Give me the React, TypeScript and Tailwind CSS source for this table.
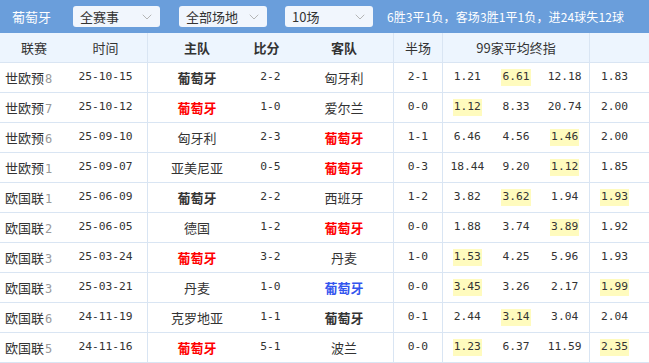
import { ChevronDown } from 'lucide-react'

type Team = { name: string; tone?: 'dark' | 'red' | 'blue' }

type Match = {
  league: string
  round: string
  date: string
  home: Team
  score: string
  away: Team
  half: string
  odds: [string, string, string]
  hi: number
  last: string
  lastHi?: boolean
}

const PT = (tone: 'dark' | 'red' | 'blue'): Team => ({ name: '葡萄牙', tone })

const MATCHES: Match[] = [
  { league: '世欧预', round: '8', date: '25-10-15', home: PT('dark'), score: '2-2', away: { name: '匈牙利' }, half: '2-1', odds: ['1.21', '6.61', '12.18'], hi: 1, last: '1.83' },
  { league: '世欧预', round: '7', date: '25-10-12', home: PT('red'), score: '1-0', away: { name: '爱尔兰' }, half: '0-0', odds: ['1.12', '8.33', '20.74'], hi: 0, last: '2.00' },
  { league: '世欧预', round: '6', date: '25-09-10', home: { name: '匈牙利' }, score: '2-3', away: PT('red'), half: '1-1', odds: ['6.46', '4.56', '1.46'], hi: 2, last: '2.00' },
  { league: '世欧预', round: '1', date: '25-09-07', home: { name: '亚美尼亚' }, score: '0-5', away: PT('red'), half: '0-3', odds: ['18.44', '9.20', '1.12'], hi: 2, last: '1.85' },
  { league: '欧国联', round: '1', date: '25-06-09', home: PT('dark'), score: '2-2', away: { name: '西班牙' }, half: '1-2', odds: ['3.82', '3.62', '1.94'], hi: 1, last: '1.93', lastHi: true },
  { league: '欧国联', round: '2', date: '25-06-05', home: { name: '德国' }, score: '1-2', away: PT('red'), half: '0-0', odds: ['1.88', '3.74', '3.89'], hi: 2, last: '1.92' },
  { league: '欧国联', round: '3', date: '25-03-24', home: PT('red'), score: '3-2', away: { name: '丹麦' }, half: '1-0', odds: ['1.53', '4.25', '5.96'], hi: 0, last: '1.93' },
  { league: '欧国联', round: '3', date: '25-03-21', home: { name: '丹麦' }, score: '1-0', away: PT('blue'), half: '0-0', odds: ['3.45', '3.26', '2.17'], hi: 0, last: '1.99', lastHi: true },
  { league: '欧国联', round: '6', date: '24-11-19', home: { name: '克罗地亚' }, score: '1-1', away: PT('dark'), half: '0-1', odds: ['2.44', '3.14', '3.04'], hi: 1, last: '2.04' },
  { league: '欧国联', round: '5', date: '24-11-16', home: PT('red'), score: '5-1', away: { name: '波兰' }, half: '0-0', odds: ['1.23', '6.37', '11.59'], hi: 0, last: '2.35', lastHi: true },
]

const cjk = "font-['Noto_Sans_CJK_SC',sans-serif]"
const num = "font-['DejaVu_Sans_Mono','Noto_Sans_CJK_SC',monospace] text-[11.25px]"

const TeamName = ({ team }: { team: Team }) => {
  const tone =
    team.tone === 'red'
      ? 'text-[#ff0000] font-bold'
      : team.tone === 'blue'
      ? 'text-[#3355ee] font-bold'
      : team.tone === 'dark'
      ? 'text-[#333] font-bold'
      : 'text-[#333]'
  return <span className={tone}>{team.name}</span>
}

const Hi = ({ on, children }: { on?: boolean; children: string }) => (
  <span className={on ? 'bg-[#fffbbe] px-px' : 'px-px'}>{children}</span>
)

const Select = ({ label, width }: { label: string; width: string }) => (
  <div className={`flex items-center justify-between h-[21px] rounded-[3px] bg-[#f1f6fd] pl-[7px] pr-[5px] ${width}`}>
    <span className="text-[13px] text-[#333]">{label}</span>
    <ChevronDown className="w-4 h-4 text-[#b0b0b0]" strokeWidth={1.4} />
  </div>
)

const row = 'grid grid-cols-[68px_79px_99px_49px_98px_49px_147px_1fr] h-[30px] border-b border-[#d9e5f3]'
const vline = 'border-l border-[#d9e5f3]'

export default function App() {
  return (
    <div className={`w-[649px] h-[363px] overflow-hidden bg-white ${cjk}`}>
      {/* Top bar */}
      <div className="flex items-center h-[33px] bg-[#6a9edb] text-white">
        <span className="pl-3 w-[73px] text-[13px]">葡萄牙</span>
        <Select label="全赛事" width="w-[87px]" />
        <div className="w-[19px]" />
        <Select label="全部场地" width="w-[88px]" />
        <div className="w-[18px]" />
        <Select label="10场" width="w-[88px]" />
        <span className="pl-[14px] text-[12px] tracking-[0.1px] whitespace-nowrap">
          6胜3平1负，客场3胜1平1负，进24球失12球
        </span>
      </div>

      {/* Header row */}
      <div className={`${row} bg-[#edf5fe] text-[13px] text-[#333] items-stretch`}>
        <div className="flex items-center justify-center">联赛</div>
        <div className="flex items-center justify-center pr-1">时间</div>
        <div className={`flex items-center justify-center font-bold ${vline}`}>主队</div>
        <div className="flex items-center justify-center font-bold pr-2">比分</div>
        <div className="flex items-center justify-center font-bold">客队</div>
        <div className={`flex items-center justify-center ${vline}`}>半场</div>
        <div className={`flex items-center justify-center ${vline}`}>99家平均终指</div>
        <div className={vline} />
      </div>

      {/* Rows */}
      {MATCHES.map((m, i) => (
        <div key={i} className={`${row} text-[13px] text-[#333] items-stretch`}>
          <div className="flex items-center pl-[5px]">
            <span className="whitespace-nowrap">
              {m.league}
              <span className="font-['DejaVu_Sans_Mono',monospace] text-[12px] text-[#999] pl-px">{m.round}</span>
            </span>
          </div>
          <div className={`flex items-center justify-center pr-1 ${num}`}>{m.date}</div>
          <div className={`flex items-center justify-center ${vline}`}>
            <TeamName team={m.home} />
          </div>
          <div className={`flex items-center justify-center ${num}`}>{m.score}</div>
          <div className="flex items-center justify-center">
            <TeamName team={m.away} />
          </div>
          <div className={`flex items-center justify-center ${vline} ${num}`}>{m.half}</div>
          <div className={`grid grid-cols-3 ${vline} ${num}`}>
            {m.odds.map((o, j) => (
              <div key={j} className="flex items-center justify-center">
                <Hi on={m.hi === j}>{o}</Hi>
              </div>
            ))}
          </div>
          <div className={`flex items-center pl-[10px] ${vline} ${num}`}>
            <Hi on={m.lastHi}>{m.last}</Hi>
          </div>
        </div>
      ))}
    </div>
  )
}
